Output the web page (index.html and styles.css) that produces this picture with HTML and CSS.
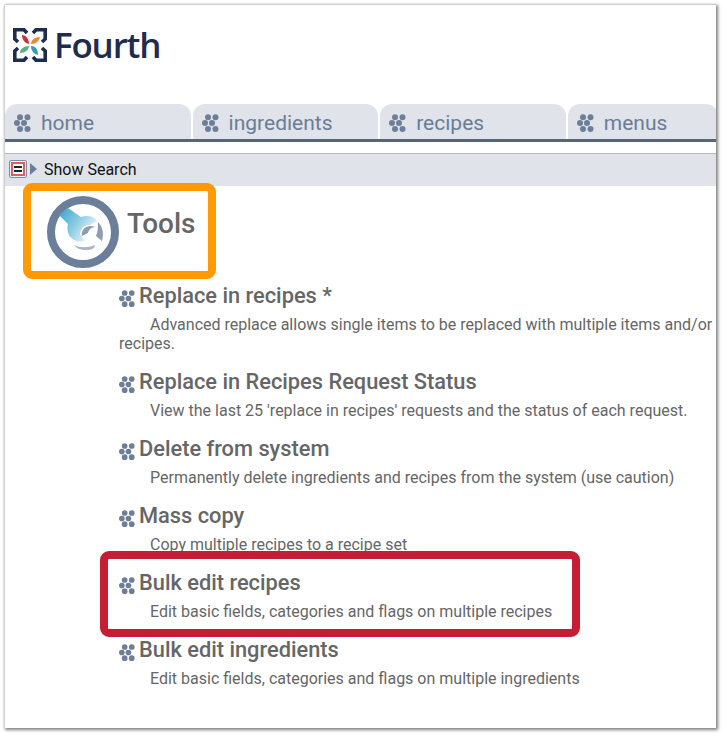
FILE: index.html
```html
<!DOCTYPE html>
<html lang="en">
<head>
    <meta charset="UTF-8">
    <title>Tools</title>
    <link rel="stylesheet" href="styles.css">
</head>
<body>
<svg class="defs" width="0" height="0">
    <symbol id="dots" viewBox="0 0 18 18">
        <circle cx="6" cy="3.2" r="3"/><circle cx="13.500" cy="3.2" r="3"/>
        <circle cx="3" cy="9" r="3"/><circle cx="10" cy="9" r="3"/>
        <circle cx="6" cy="15" r="3"/><circle cx="13.500" cy="15" r="3"/>
    </symbol>
</svg>
<div class="frame">
    <header class="logo">
        <svg class="logo-mark" viewBox="0 0 34 34" width="34" height="34">
            <g fill="none" stroke="#1f2c4d" stroke-width="3.6">
                <path d="M14 5L11 1.800H1.800V11L5 14"/>
                <path d="M20 5L23 1.800H32.200V11L29 14"/>
                <path d="M29 20L32.200 23V32.200H23L20 29"/>
                <path d="M5 20L1.800 23V32.200H11L14 29"/>
            </g>
            <path d="M9 7c4 0 7 4 7 9-4-1-7-4-7-9z" fill="#c8313a"/>
            <path d="M18 16c0-4 4-7 9-7-1 4-4 7-9 7z" fill="#e98a2e"/>
            <path d="M18 18c5 0 7 4 7 9-4-1-7-4-7-9z" fill="#3b9bb5"/>
            <path d="M7 25c0-4 4-7 9-7 0 4-4 7-9 7z" fill="#5caf7d"/>
        </svg>
        <span class="logo-text">Fourth</span>
    </header>
    <nav class="tabs">
        <a class="tab" href="#"><svg class="dots"><use href="#dots"/></svg>home</a>
        <a class="tab" href="#"><svg class="dots"><use href="#dots"/></svg>ingredients</a>
        <a class="tab" href="#"><svg class="dots"><use href="#dots"/></svg>recipes</a>
        <a class="tab tab-last" href="#"><svg class="dots"><use href="#dots"/></svg>menus</a>
    </nav>
    <div class="search-bar">
        <span class="search-btn"><span class="search-btn-inner"></span></span>
        <span class="arrow"></span>
        <span>Show Search</span>
    </div>
    <main>
        <div class="title">
            <svg class="tools-icon" viewBox="0 0 74 74" width="74" height="74">
                <defs>
                    <linearGradient id="wrench" x1="0" y1="0" x2="1" y2="0.6">
                        <stop offset="0" stop-color="#38a3cf"/>
                        <stop offset="0.55" stop-color="#8fcde3"/>
                        <stop offset="1" stop-color="#eef7fa"/>
                    </linearGradient>
                </defs>
                <circle cx="37" cy="37" r="32" fill="#fff" stroke="#6b7f9a" stroke-width="8"/>
                <path d="M13 20l9-7 13 9c6-2 13-1 16 4l-7 4c-6 0-9 3-10 9l5 7c-7 2-13-1-16-6-2-4-2-8-1-11z" fill="url(#wrench)"/>
                <path d="M36 41c-1-6 3-10 9-10l5 1c-4 0-7 2-8 6z" fill="#8d9cb2"/>
                <path d="M52 27c5 5 6 12 4 19l-6-5c2-4 2-9 2-14z" fill="#8d9cb2"/>
                <path d="M28 50c6 3 14 3 21 0 0 3-3 5-9 5-5 0-10-2-12-5z" fill="#a9b4c4"/>
            </svg>
            <h1>Tools</h1>
        </div>
        <ul class="tool-list">
            <li>
                <h2><svg class="dots small"><use href="#dots"/></svg>Replace in recipes *</h2>
                <p>Advanced replace allows single items to be replaced with multiple items and/or recipes.</p>
            </li>
            <li>
                <h2><svg class="dots small"><use href="#dots"/></svg>Replace in Recipes Request Status</h2>
                <p>View the last 25 'replace in recipes' requests and the status of each request.</p>
            </li>
            <li>
                <h2><svg class="dots small"><use href="#dots"/></svg>Delete from system</h2>
                <p>Permanently delete ingredients and recipes from the system (use caution)</p>
            </li>
            <li>
                <h2><svg class="dots small"><use href="#dots"/></svg>Mass copy</h2>
                <p>Copy multiple recipes to a recipe set</p>
            </li>
            <li>
                <h2><svg class="dots small"><use href="#dots"/></svg>Bulk edit recipes</h2>
                <p>Edit basic fields, categories and flags on multiple recipes</p>
            </li>
            <li>
                <h2><svg class="dots small"><use href="#dots"/></svg>Bulk edit ingredients</h2>
                <p>Edit basic fields, categories and flags on multiple ingredients</p>
            </li>
        </ul>
    </main>
    <div class="mark mark-orange"></div>
    <div class="mark mark-red"></div>
</div>
</body>
</html>
```
FILE: styles.css
```css
html, body {
    margin: 0;
    padding: 0;
    background-color: #fff;
}
body {
    font-family: Roboto, Arial, sans-serif;
    padding: 5px 9px 9px 5px;
    height: 723px;
}
.defs {
    position: absolute;
}
.frame {
    position: relative;
    width: 711px;
    height: 723px;
    background-color: #fff;
    box-shadow: 1px 1px 3px 1px rgba(0,0,0,0.5);
    overflow: hidden;
}
.logo {
    height: 99px;
    display: flex;
    align-items: flex-start;
    padding: 23px 0 0 8px;
    box-sizing: border-box;
}
.logo-text {
    font-family: "Open Sans", Arial, sans-serif;
    font-size: 35px;
    font-weight: 600;
    line-height: 34px;
    margin-left: 7px;
    color: #1f2c4d;
    letter-spacing: -1.2px;
}
.tabs {
    display: flex;
    gap: 2px;
    height: 35px;
    border-bottom: 3px solid #56657a;
}
.tab {
    flex: 0 0 185.600px;
    box-sizing: border-box;
    display: flex;
    align-items: center;
    gap: 9px;
    padding: 3px 0 0 9px;
    background-color: #e0e3e9;
    border-radius: 12px 12px 0 0;
    color: #6a7d96;
    font-size: 21px;
    text-decoration: none;
}
.tab-last {
    flex-basis: 150px;
}
.dots {
    width: 18px;
    height: 18px;
    fill: #6d7f98;
    flex: none;
}
.dots.small {
    width: 17px;
    height: 17px;
    margin-right: 3px;
    position: relative;
    top: 4px;
}
.search-bar {
    margin-top: 11px;
    height: 30px;
    border-top: 1px solid #b4b9c4;
    background-color: #e0e3e9;
    display: flex;
    align-items: center;
    padding: 0 0 2px 4px;
    font-size: 16px;
    color: #111;
}
.search-btn {
    width: 18px;
    height: 18px;
    box-sizing: border-box;
    border: 1px solid #7d8ba3;
    border-radius: 2px;
    display: flex;
    align-items: center;
    justify-content: center;
    background-color: #eef0f4;
}
.search-btn-inner {
    width: 14px;
    height: 14px;
    box-sizing: border-box;
    border: 2px solid #d9605f;
    background: linear-gradient(#fff 2px, #222 2px, #222 4px, #fff 4px, #fff 6px, #222 6px, #222 8px, #fff 8px);
    background-size: 8px 100%;
    background-repeat: no-repeat;
    background-position: center;
    background-color: #fff;
}
.arrow {
    width: 0;
    height: 0;
    margin: 0 7px 0 3px;
    border-left: 7px solid #6d7f98;
    border-top: 6px solid transparent;
    border-bottom: 6px solid transparent;
}
.title {
    display: flex;
    align-items: flex-start;
    padding: 9px 0 0 41px;
    height: 95px;
    box-sizing: border-box;
}
.title h1 {
    margin: 11px 0 0 7px;
    font-size: 28px;
    line-height: 36px;
    font-weight: 500;
    color: #666;
}
.tool-list {
    list-style: none;
    margin: 0;
    padding: 0 0 0 114px;
}
.tool-list li {
    margin-bottom: 14px;
}
.tool-list h2 {
    margin: 0 0 5px;
    font-size: 21.800px;
    line-height: 29px;
    font-weight: 500;
    color: #666;
}
.tool-list p {
    margin: 0;
    font-size: 16px;
    line-height: 19px;
    color: #666;
    text-indent: 31px;
}
.mark {
    position: absolute;
    box-sizing: border-box;
    border-radius: 9px;
}
.mark-orange {
    left: 18px;
    top: 178px;
    width: 193px;
    height: 96px;
    border: 8px solid #ff9900;
}
.mark-red {
    left: 95px;
    top: 546px;
    width: 480px;
    height: 86px;
    border: 8px solid #c41e34;
}
```
